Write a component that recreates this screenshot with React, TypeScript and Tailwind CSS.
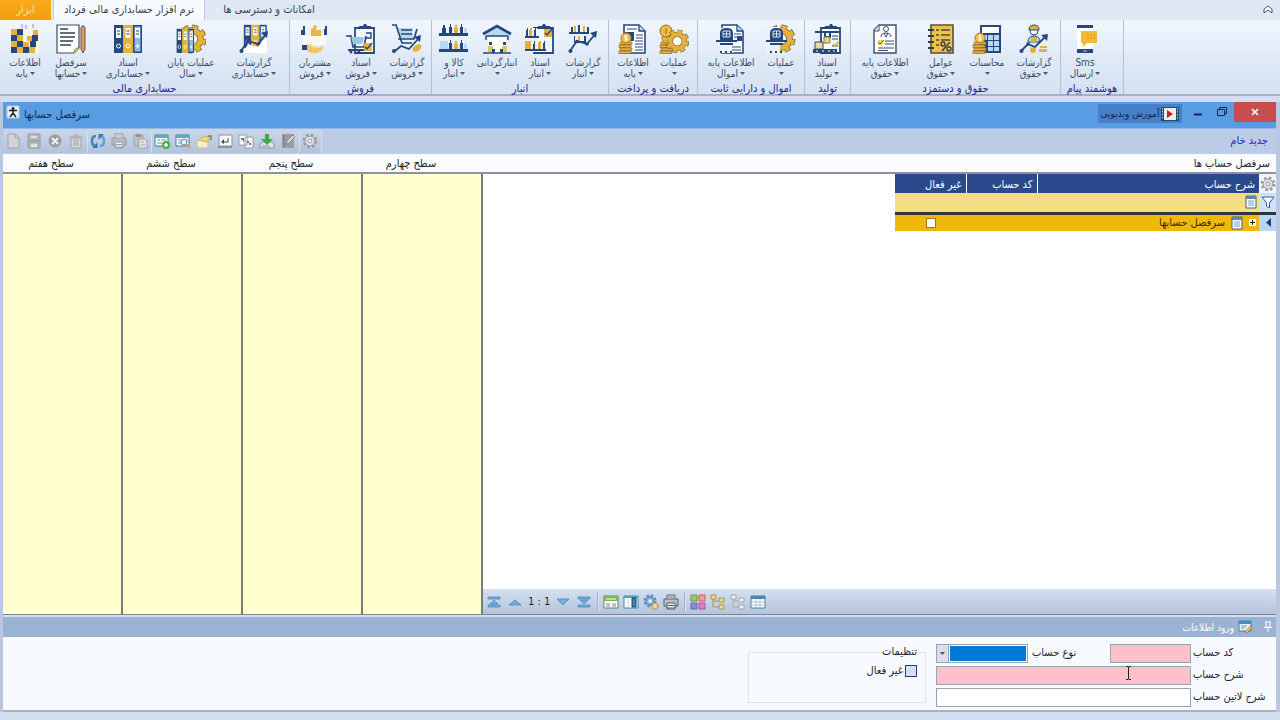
import type { ReactNode } from "react";

const NAVY = "#25467f";
const GOLD = "#e3b13c";
const SKY = "#b5d8f3";

const Binders = () => (
  <>
    <path fill={NAVY} d="M1 1h9v28H1z" />
    <path fill={GOLD} d="M10 1h10v28H10z" />
    <path fill={NAVY} d="M20 1h9v28h-9z" />
    <path fill="#8dbbe4" d="M21.500 2.500h6v25h-6z" />
    <path fill="#f4f8fc" d="M3 4h5v10H3zM12.500 4h5v10h-5zM22 4h5v10h-5z" />
    <path stroke={NAVY} d="M4 7h3M4 10h3M13.500 7h3M13.500 10h3M23 7h3M23 10h3" />
    <circle cx="5.500" cy="22" r="2" fill="none" stroke="#fff" />
    <circle cx="15" cy="22" r="2" fill="none" stroke="#fff" />
    <path stroke="#fff" d="M24.500 20v4M22.500 22h4" />
  </>
);

const Trend = () => (
  <>
    <path d="M2 27 9 17l10 3L28 9" fill="none" stroke={NAVY} strokeWidth="1.800" />
    <path d="m22 9 7-2-1 7z" fill={NAVY} />
    <circle cx="2.500" cy="27" r="2" fill={NAVY} />
    <circle cx="9" cy="17.500" r="1.800" fill={NAVY} />
    <circle cx="19" cy="20" r="1.800" fill={NAVY} />
  </>
);

const GearShape = () => (
  <>
    <circle cx="15" cy="15" r="12" fill="none" stroke="#77602c" strokeWidth="5" strokeDasharray="5.600 3.820" />
    <circle cx="15" cy="15" r="8.500" fill="none" stroke="#77602c" strokeWidth="6.500" />
    <circle cx="15" cy="15" r="12" fill="none" stroke={GOLD} strokeWidth="3.600" strokeDasharray="4.600 4.820" strokeDashoffset="-.500" />
    <circle cx="15" cy="15" r="8.500" fill="none" stroke={GOLD} strokeWidth="5" />
  </>
);

const Coins = () => (
  <>
    <path fill={GOLD} stroke="#8d6b20" strokeWidth=".700" d="M1 27h12v2.500H1zM2 24h12v2.500H2zM1 21h12v2.500H1zM2 18h12v2.500H2z" />
    <circle cx="8" cy="14" r="5" fill="#f2bd42" stroke="#a67b20" />
    <path d="M9.500 12H7.500c-1.500 0-1.500 2 0 2h1c1.500 0 1.500 2 0 2h-2M8 10.500v7" stroke="#fff" fill="none" />
  </>
);

const Sheet = () => (
  <>
    <path d="M6 1h15l6 6v22H6z" fill="#fff" stroke={NAVY} strokeWidth="1.600" />
    <path d="M21 1v6h6" fill={SKY} stroke={NAVY} strokeWidth="1.300" />
  </>
);

const Bottles = ({ y }: { y: number }) => (
  <g transform={`translate(0 ${y})`}>
    <path d="M3 9V4h1V1h2v3h1v5zM10 9V3h1V0h1v3h1v6z" fill={NAVY} />
    <path d="M15 9V4h1V1h2v3h1v5z" fill={GOLD} />
    <path d="M21 9V3h1V0h1v3h1v6z" fill={NAVY} />
    <path d="M25 9V4h3v5z" fill={SKY} />
  </g>
);

const Clipboard = () => (
  <>
    <path d="M9 4h19v25H9z" fill="#f4f9fd" stroke={NAVY} strokeWidth="1.800" />
    <path d="M13 5V2h4l1-2h2l1 2h4v3z" fill={NAVY} />
  </>
);

const Beacon = () => (
  <>
    <path d="M4 16V9q0-5 6.500-5T17 9v7z" fill={NAVY} />
    <path d="M7 7h7v6H7zM10.500 7v6M7 10h7" stroke="#d8e9f8" fill="none" />
    <path d="M0 17h21M4 20h13" stroke={NAVY} strokeWidth="2" />
    <path d="M4 28h2M9 28h2M14 28h2" stroke={NAVY} strokeWidth="2" />
  </>
);

const ribbonIcons: Record<string, ReactNode> = {
  mosaic: (
    <>
      <path fill="#f7f6ec" d="M1 5h28v24H1z" />
      <path fill={GOLD} d="M1 5h6v6H1zM7 11h6v6H7zM1 17h6v6H1zM13 18h6v5h-6zM7 23h6v6H7zM19 23h6v6h-6zM23 6h5v5h-5zM17 12h5v5h-5z" />
      <path fill={NAVY} d="M7 5h6v6H7zM1 11h6v6H1zM22 11h6v6h-6zM7 17h6v6H7zM13 23h6v6h-6zM20 17h6v6h-6zM1 23h6v6H1z" />
      <path stroke="#8896b0" d="M12 0v4M16 1v4M23 0v4" />
    </>
  ),
  document: (
    <>
      <path d="M1 1h22v23l-5 5H1z" fill="#fff" stroke="#444c58" strokeWidth="1.200" />
      <path d="M4 5h8M4 9h15M4 13h15M4 17h13M4 21h11" stroke="#333f50" strokeWidth="1.500" />
      <path d="M18 29c1-3 0-5 5-5" fill="#eee07c" stroke="#817832" />
      <path d="M25 4q2-5 4 0v21l-2 4-2-4z" fill="#d79c67" stroke="#705246" />
    </>
  ),
  binders: <Binders />,
  bindersGear: (
    <>
      <g transform="translate(1 0)">
        <GearShape />
      </g>
      <g transform="translate(0 4) scale(.62 .86)">
        <Binders />
      </g>
    </>
  ),
  bindersTrend: (
    <>
      <g transform="translate(4 0) scale(.82 .82)">
        <Binders />
      </g>
      <path fill="#fff" d="m4 29 5-9 10 3 9-12v18z" />
      <Trend />
    </>
  ),
  customers: (
    <>
      <path fill={NAVY} d="M1 6h4v5H1zM24 5h3v6h-3zM3 2h2v5H3zM25 2h2v4h-2z" />
      <path fill="#edb544" d="M11 5q2 0 3-4l3 1-1 4h5v6H11z" />
      <path fill="#f8f8f4" d="M3 12h23v9H3z" />
      <path fill={NAVY} d="M2 21h5v5H2z" />
      <path fill="#f0c765" d="M7 20q5 1 8 2l3 2 6-2-3 5q-7 5-14 0z" />
      <path fill="#fae6ae" d="M9 21h8l-2 3z" />
    </>
  ),
  saleDoc: (
    <>
      <Clipboard />
      <path d="M0 12h5l2 11h11l2-11" fill="none" stroke={NAVY} strokeWidth="1.700" />
      <path d="M5 13h13l-2 7H7z" fill="#9dc5e8" />
      <path d="M2 26h17" stroke={NAVY} strokeWidth="2" />
      <circle cx="5" cy="28" r="1.500" fill={NAVY} />
      <circle cx="13" cy="28" r="1.500" fill={NAVY} />
      <path fill={GOLD} d="M18 19h8v8h-8z" />
      <path d="m19 23 2 2 5-6M20 9h5v5h-5" stroke={NAVY} fill="none" strokeWidth="1.400" />
    </>
  ),
  cart: (
    <>
      <path fill={SKY} d="M5 4h16v10H8z" />
      <path d="M0 1h4l6 18h10M6 15h16l3-10M9 6h11M9 10h11" stroke={NAVY} strokeWidth="1.700" fill="none" />
      <path d="m3 27 6-5 8 3 10-11" fill="none" stroke={NAVY} strokeWidth="1.800" />
      <path d="m22 13 7-2-1 7z" fill={NAVY} />
      <circle cx="2" cy="27" r="2" fill={NAVY} />
      <ellipse cx="25" cy="24" rx="5" ry="3" transform="rotate(-35 25 24)" fill={GOLD} />
    </>
  ),
  shelves: (
    <>
      <Bottles y={0} />
      <Bottles y={16} />
      <path fill={NAVY} d="M0 9h29v3H0zM0 25h29v3H0z" />
      <path fill={SKY} d="M1 17h8v8H1z" />
    </>
  ),
  warehouse: (
    <>
      <path d="M6 10h18v18H6z" fill="#fff" />
      <path d="M15 2 2 9v3h26V9z" fill={SKY} />
      <path d="M1 10 15 2l14 8" fill="none" stroke={NAVY} strokeWidth="2.600" />
      <path d="M4 12h22M4 12v4M26 12v4M1 29h28" stroke={NAVY} strokeWidth="1.500" />
      <path d="M6 22h5v6H6zM20 22h5v6h-5z" fill="#d9c85b" />
      <path d="M7 18h3v3H7zM21 18h3v3h-3zM10 25h3v4h-3zM18 25h3v4h-3z" fill={NAVY} />
    </>
  ),
  stockDoc: (
    <>
      <Clipboard />
      <path fill="#e9f4fc" d="M0 4h12v24H0zM9 16h16v10H9z" />
      <path fill={NAVY} d="M1 12V6h1V4h1v8M9 12V6h1V3h1v9M0 12h14v2H0zM0 25h21v2H0zM8 25v-5h1v-3h1v8M18 25v-6h1v-2h1v8" />
      <path fill={GOLD} d="M4 12V6h1V4h2v8M0 17h6v8H0zM13 25v-6h1v-2h2v8M19 5h8v8h-8z" />
      <path d="m20 9 2 2 5-6" stroke={NAVY} fill="none" strokeWidth="1.400" />
    </>
  ),
  stockTrend: (
    <>
      <path fill={NAVY} d="M3 8V3h2v5M10 8V1h2v7M19 8V3h2v5M1 8h20v2H1zM6 17v-5h1v5M16 17v-5h2v5M6 17h12v2H6z" />
      <path fill={GOLD} d="M6 8V2h2v6M15 8V2h2v6M10 17v-5h2v5" />
      <Trend />
    </>
  ),
  financeDoc: (
    <>
      <Sheet />
      <path fill={NAVY} d="M7 8h9v9H7z" />
      <path d="M9 5h10M18 11h7M18 14h7M17 17h8M17 20h8M17 23h8M17 26h8" stroke={NAVY} />
      <Coins />
    </>
  ),
  coinsGear: (
    <>
      <Coins />
      <circle cx="7" cy="7" r="6" fill="#f0bd40" stroke="#8d6b20" />
      <path d="M7 4v6" stroke="#8d6b20" />
      <g transform="translate(6 5) scale(.82)">
        <circle cx="15" cy="15" r="7" fill="#fff" />
        <GearShape />
      </g>
    </>
  ),
  assetDoc: (
    <>
      <Sheet />
      <path fill="#edf4fb" d="M4 4h13v25H4z" />
      <path d="M18 10h7M18 13h7M16 23h9M16 26h9" stroke={NAVY} />
      <path d="M21 12h5v5h-5z" fill={NAVY} />
      <Beacon />
    </>
  ),
  assetGear: (
    <>
      <GearShape />
      <path fill="#e9f2fa" d="M0 3h14v27H0z" />
      <Beacon />
    </>
  ),
  production: (
    <>
      <Clipboard />
      <path d="M3 8h24M13 8v5h5V8" stroke={NAVY} strokeWidth="2" fill="none" />
      <path fill="#e8d48b" d="M12 13h6v6h-6z" stroke="#8b793f" />
      <path d="M3 18h8v7H3z" fill="#eadb9c" stroke={NAVY} />
      <path d="M20 12h6M20 15h6M20 22h6" stroke={NAVY} />
      <path d="m21 20 2 2 4-5" stroke={GOLD} strokeWidth="2" fill="none" />
      <path d="M1 25h24v4H1z" fill={NAVY} />
      <path d="M4 27h2M10 27h2M16 27h2M21 27h2" stroke="#fff" />
    </>
  ),
  payrollDoc: (
    <>
      <path d="M9 1h17v28H4V6z" fill="#fff" stroke="#3b4d6e" strokeWidth="1.400" />
      <path d="M9 1v6H4" fill="#dbe9f5" stroke="#3b4d6e" />
      <circle cx="16" cy="5" r="2.500" fill="none" stroke="#3b4d6e" />
      <path d="M11 13q0-4 5-4t5 4M14 9l2 4 2-4" fill="none" stroke="#3b4d6e" />
      <path d="M8 16h5v5H8z" fill="#eed564" />
      <path d="m8 18 2 2 4-4" fill="none" stroke="#6c5a20" />
      <path d="M15 17h9M15 20h9M8 24h16M8 26.500h10" stroke="#3b4d6e" />
    </>
  ),
  factors: (
    <>
      <path d="M5 1h22v28H5z" fill="#efc04a" stroke="#57513e" strokeWidth="1.600" />
      <path d="M2 6h6M2 12h6M2 18h6M2 24h6" stroke="#333d52" strokeWidth="2" />
      <path d="M10 6h3M15 6h9M10 11h3M15 11h9M10 16h3M15 16h9M10 21h3" stroke="#4d4938" strokeWidth="1.600" />
      <circle cx="17" cy="20" r="2" fill="none" stroke="#333d52" strokeWidth="1.300" />
      <circle cx="23" cy="25" r="2" fill="none" stroke="#333d52" strokeWidth="1.300" />
      <path d="m16 27 8-9" stroke="#333d52" strokeWidth="1.400" />
    </>
  ),
  calculator: (
    <>
      <path d="M8 1h21v28H8z" fill={NAVY} />
      <path d="M10 3h17v6H10z" fill="#fff" />
      <path d="M10 11h5v5h-5zM16 11h5v5h-5zM22 11h5v5h-5zM16 17h5v5h-5zM22 17h5v5h-5zM16 23h5v4h-5zM22 23h5v4h-5z" fill="#b9daf4" />
      <Coins />
    </>
  ),
  workerTrend: (
    <>
      <circle cx="15" cy="7" r="4" fill="#fff" stroke={NAVY} />
      <path d="M10 6q0-5 5-5t5 5z" fill={GOLD} stroke={NAVY} />
      <path d="M9 18q0-6 6-6t6 6z" fill={SKY} stroke={NAVY} />
      <path d="M12 18v-5h6v5" fill={GOLD} />
      <path d="M21 22h7v2h-7zM20 25h8v3h-8z" fill={GOLD} />
      <circle cx="14" cy="26" r="3" fill={GOLD} />
      <path d="m2 27 7-7 7 3 11-11" fill="none" stroke={NAVY} strokeWidth="1.800" />
      <path d="m22 11 7-1-1 7z" fill={NAVY} />
      <circle cx="2.500" cy="27" r="2" fill={NAVY} />
      <circle cx="9" cy="20" r="1.800" fill={NAVY} />
    </>
  ),
  phone: (
    <>
      <path d="M7 1h16v28H7z" fill="#fff" />
      <path d="M7 1h16v3H7zM7 25h16v4H7z" fill={NAVY} />
      <path d="M11 7h16v12H17l-4 4v-4h-2z" fill="#f1ba32" />
      <path d="M17 11h8M17 14h8" stroke="#d69a1f" strokeDasharray="2 1" />
      <path d="M13 27h4" stroke="#9ec5e6" />
    </>
  ),
};

type RibbonItem = { icon: string; top: string; bottom?: string; width: string };

const ribbonGroups: { title: string; width: string; items: RibbonItem[] }[] = [
  {
    title: "حسابداری مالی",
    width: "w-[290px]",
    items: [
      { icon: "mosaic", top: "اطلاعات", bottom: "پایه", width: "w-12" },
      { icon: "document", top: "سرفصل", bottom: "حسابها", width: "w-11" },
      { icon: "binders", top: "اسناد", bottom: "حسابداری", width: "w-[70px]" },
      { icon: "bindersGear", top: "عملیات پایان", bottom: "سال", width: "w-14" },
      { icon: "bindersTrend", top: "گزارشات", bottom: "حسابداری", width: "w-[70px]" },
    ],
  },
  {
    title: "فروش",
    width: "w-[142px]",
    items: [
      { icon: "customers", top: "مشتریان", bottom: "فروش", width: "w-12" },
      { icon: "saleDoc", top: "اسناد", bottom: "فروش", width: "w-11" },
      { icon: "cart", top: "گزارشات", bottom: "فروش", width: "w-12" },
    ],
  },
  {
    title: "انبار",
    width: "w-[177px]",
    items: [
      { icon: "shelves", top: "کالا و", bottom: "انبار", width: "w-[42px]" },
      { icon: "warehouse", top: "انبارگردانی", width: "w-11" },
      { icon: "stockDoc", top: "اسناد", bottom: "انبار", width: "w-[42px]" },
      { icon: "stockTrend", top: "گزارشات", bottom: "انبار", width: "w-11" },
    ],
  },
  {
    title: "دریافت و پرداخت",
    width: "w-[89px]",
    items: [
      { icon: "financeDoc", top: "اطلاعات", bottom: "پایه", width: "w-[46px]" },
      { icon: "coinsGear", top: "عملیات", width: "w-9" },
    ],
  },
  {
    title: "اموال و دارایی ثابت",
    width: "w-[107px]",
    items: [
      { icon: "assetDoc", top: "اطلاعات پایه", bottom: "اموال", width: "w-16" },
      { icon: "assetGear", top: "عملیات", width: "w-9" },
    ],
  },
  {
    title: "تولید",
    width: "w-[46px]",
    items: [{ icon: "production", top: "اسناد", bottom: "تولید", width: "w-[42px]" }],
  },
  {
    title: "حقوق و دستمزد",
    width: "w-[210px]",
    items: [
      { icon: "payrollDoc", top: "اطلاعات پایه", bottom: "حقوق", width: "w-[66px]" },
      { icon: "factors", top: "عوامل", bottom: "حقوق", width: "w-[46px]" },
      { icon: "calculator", top: "محاسبات", width: "w-[46px]" },
      { icon: "workerTrend", top: "گزارشات", bottom: "حقوق", width: "w-12" },
    ],
  },
  {
    title: "هوشمند پیام",
    width: "w-[63px]",
    items: [{ icon: "phone", top: "Sms", bottom: "ارسال", width: "w-[46px]" }],
  },
];

const Tiny = ({ children }: { children: ReactNode }) => (
  <svg viewBox="0 0 16 16" className="size-4 shrink-0" fill="none">
    {children}
  </svg>
);

const Caret = () => (
  <svg viewBox="0 0 5 3" className="w-[5px] h-[3px]" fill="#4a5a76">
    <path d="M0 0h5L2.500 3z" />
  </svg>
);

const smallGear = (
  <>
    <circle cx="8" cy="8" r="6.300" stroke="#95979d" strokeWidth="2" strokeDasharray="2.600 2.350" />
    <circle cx="8" cy="8" r="4.800" fill="#e3e5ea" stroke="#95979d" />
    <circle cx="8" cy="8" r="2" fill="#f2f3f6" stroke="#95979d" />
  </>
);

const printer = (dark: string) => (
  <>
    <path d="M4 5V1h8v4M4 11v4h8v-4" fill="#f4f6f8" stroke={dark} />
    <path d="M1 5h14v7H1z" fill="#b8bcc4" stroke={dark} />
    <path d="M4 9h8v5H4z" fill="#eee" stroke={dark} />
    <path d="M5 3h6M5 11.500h6" stroke={dark} />
  </>
);

const windowIcon = (
  <>
    <path d="M1 2h13v11H1z" fill="#fff" stroke="#327e9c" />
    <path d="M1 2h13v3H1z" fill="#63a8be" />
    <path d="M3 7h3M7 7h5M3 10h5" stroke="#698c98" />
  </>
);

const toolGroups: { name: string; icon: ReactNode }[][] = [
  [
    { name: "جدید", icon: <><path d="M3 1h7l4 4v10H3z" fill="#d3d4d8" stroke="#a1a4ab" /><path d="M10 1v4h4" stroke="#a1a4ab" /></> },
    { name: "ذخیره", icon: <><path d="M2 1h12v14H2z" fill="#bfc1c6" stroke="#999ca4" /><path d="M4 2h8v4H4zM4 10h8v5H4z" fill="#e0e1e4" stroke="#999ca4" /><path d="M2 8h12" stroke="#888c94" /></> },
    { name: "انصراف", icon: <><circle cx="8" cy="8" r="6.500" fill="#9b9da3" /><path d="m5 5 6 6m0-6-6 6" stroke="#f1f2f5" strokeWidth="2" /></> },
    { name: "حذف", icon: <><path d="M3 5h10v10H3z" fill="#d7d8dc" stroke="#a1a4aa" /><path d="M1 4h14M6 4V2h4v2M6 6v7M8 6v7M10 6v7" stroke="#a1a4aa" /></> },
  ],
  [
    { name: "بازخوانی", icon: <><path d="M6 3Q2 3 2 8t4 5" stroke="#4385b6" strokeWidth="2.500" /><path d="M10 13q4 0 4-5t-4-5" stroke="#5ca2cf" strokeWidth="2.500" /><path d="M7.500 9v6H2zM8.500 7V1H14z" fill="#377caf" /></> },
    { name: "چاپ", icon: printer("#94979f") },
    { name: "الصاق", icon: <><path d="M2 2h9v11H2z" fill="#bfc0c5" stroke="#a1a3a9" /><path d="M4 1h5v3H4z" fill="#93969e" /><path d="M7 6h6l2 2v7H7z" fill="#e4e5e8" stroke="#a1a3a9" /><path d="M9 9h3M9 12h4" stroke="#a1a3a9" /></> },
  ],
  [
    { name: "افزودن", icon: <>{windowIcon}<circle cx="12" cy="12" r="4" fill="#4caf45" /><path d="M12 10v4M10 12h4" stroke="#fff" strokeWidth="1.500" /></> },
    { name: "جستجو", icon: <>{windowIcon}<circle cx="9" cy="9" r="3" fill="#dcefff" stroke="#5b86aa" /><path d="m11 11 4 4" stroke="#d99d43" strokeWidth="2" /></> },
    { name: "برچسب", icon: <><path d="M1 7h11v8H1z" fill="#f4eed0" stroke="#c4bb92" /><path d="m3 7 5-4 6 1-3 5z" fill="#ecd778" stroke="#c9b45c" /><path d="M12 3h3v4" stroke="#6f9159" strokeWidth="1.500" /></> },
    { name: "ورود", icon: <><path d="M2 2h13v11H2z" fill="#f9fafb" stroke="#8b929e" /><path d="M1 14h14" stroke="#8b929e" strokeWidth="2" /><path d="M11 5v4H5" stroke="#3f4a5c" /><path d="m7 6-3 3 3 2z" fill="#3f4a5c" /></> },
    { name: "رونوشت", icon: <><path d="M1 2h8v10H1zM7 4h8v11H7z" fill="#f7f7f8" stroke="#9ca0aa" /><path d="M3 6h3M5 8h1M9 9h2M11 11h2" stroke="#48505c" strokeWidth="1.500" /></> },
    { name: "دریافت", icon: <><path d="m1 11 2-2h10l2 2v4H1z" fill="#e1e3e8" stroke="#8e939c" /><path d="M6 1h4v5h4l-6 6-6-6h4z" fill="#3fa848" /><path d="M3 13h8" stroke="#8e939c" /></> },
    { name: "یادداشت", icon: <><path d="M2 1h12v14H2z" fill="#999ca1" /><path d="M4 2v12" stroke="#73777e" /><path d="m6 11 1-3 6-6 2 2-6 6z" fill="#d8d9dc" stroke="#777" strokeWidth=".700" /></> },
  ],
  [{ name: "تنظیمات", icon: smallGear }],
];

const gridIcon = (
  <>
    <path d="M1 2h14v12H1z" fill="#fff" stroke="#3e7e9d" />
    <path d="M1 2h14v3H1z" fill="#438aac" />
    <path d="M6 5v9M10 5v9M2 8h12M2 11h12" stroke="#a9c4cf" />
  </>
);

const treeIcon = (fill: string, line: string) => (
  <>
    <path d="M3 4v9h6M3 7h6M3 3h3" stroke={line} />
    <path d="M1 1h5v4H1zM9 4h5v4H9zM9 11h5v4H9z" fill={fill} stroke={line} />
  </>
);

const navIcons: { name: string; icon: ReactNode }[][] = [
  [
    { name: "نمای کارت", icon: <><path d="M1 2h14v12H1z" fill="#fff" stroke="#4b8a79" /><path d="M1 2h14v5H1z" fill="#83b64a" /><path d="M3 5h10" stroke="#fff" /><path d="M3 10h4M9 10h4M3 12h4M9 12h4" stroke="#7c8888" /></> },
    { name: "ستون‌ها", icon: <><path d="M1 2h14v12H1z" fill="#fff" stroke="#398daa" /><path d="M1 3h14" stroke="#4da4bd" strokeWidth="2" /><path d="M9 4h4v9H9z" fill="#3e87b0" stroke="#20445d" /><path d="M5 5v9" stroke="#b8c9d2" /></> },
    { name: "پیکربندی", icon: <><circle cx="7" cy="7" r="5.500" stroke="#568db9" strokeWidth="2" strokeDasharray="2.600 1.720" /><circle cx="7" cy="7" r="4" fill="#8fbadb" stroke="#568db9" strokeWidth="1.500" /><circle cx="7" cy="7" r="1.500" fill="#f8fbff" /><circle cx="12" cy="12" r="3" fill="#f5d68e" stroke="#c79746" strokeWidth="1.600" strokeDasharray="2 .700" /></> },
    { name: "چاپ فهرست", icon: printer("#545e6a") },
  ],
  [
    { name: "رنگ‌ها", icon: <><path d="M1 1h6v6H1z" fill="#9aca5e" stroke="#6d9f47" /><path d="M9 1h6v6H9z" fill="#efa38c" stroke="#cb6557" /><path d="M1 9h6v6H1z" fill="#8d8adc" stroke="#6363ba" /><path d="M9 9h6v6H9z" fill="#dc7ec6" stroke="#b15198" /></> },
    { name: "باز کردن درخت", icon: treeIcon("#eadb8d", "#ad964c") },
    { name: "بستن درخت", icon: treeIcon("#eceff4", "#a0a9b6") },
    { name: "جدول", icon: gridIcon },
  ],
];

const arrows: Record<string, ReactNode> = {
  first: <path d="M2 3h12v2H2zM2 13h12v-2H2zM8 6l4 4H4z" />,
  prev: <path d="m8 6 6 5H2z" />,
  next: <path d="M2 5h12l-6 6z" />,
  last: <path d="M2 3h12v2H2zM2 13h12v-2H2zM4 6h8l-4 4z" />,
};

const NavArrow = ({ kind, label }: { kind: string; label: string }) => (
  <button aria-label={label}>
    <svg viewBox="0 0 16 16" className="size-4" fill="#76b0da" stroke="#4788b8" strokeWidth=".800">
      {arrows[kind]}
    </svg>
  </button>
);

const Divider = () => <span className="h-5 w-0.5 bg-[#a3b2ca] border-r border-[#dde6f2]" />;

const Note = () => (
  <svg viewBox="0 0 12 14" className="h-3.5 w-3 inline-block" fill="none">
    <path d="M1 1h10v12H1z" fill="#f8fbff" stroke="#50617d" />
    <path d="M1 1h10v3H1z" fill="#5e86b4" />
    <path d="M3 6h6M3 8h6M3 10h6" stroke="#7ca2c7" />
  </svg>
);

const Ribbon = () => (
  <nav className="flex h-[76px] bg-linear-to-b from-[#f1f6fd] via-[#e0eaf7] to-[#d5e1f1] border-b-2 border-[#a4b0c6]">
    {ribbonGroups.map((group) => (
      <section
        key={group.title}
        className={`${group.width} shrink-0 flex flex-col border-r border-[#b3c0d5] pt-1`}
      >
        <div className="flex px-px">
          {group.items.map((item) => (
            <button
              key={item.icon}
              className={`${item.width} shrink-0 flex flex-col items-center text-[10px] leading-[11px] text-[#384a68]`}
            >
              <svg viewBox="0 0 30 30" className="size-[30px] mb-[3px]" fill="none">
                {ribbonIcons[item.icon]}
              </svg>
              <span className="whitespace-nowrap">{item.top}</span>
              <span dir="rtl" className="flex items-center gap-0.5 whitespace-nowrap h-[11px]">
                <Caret />
                {item.bottom}
              </span>
            </button>
          ))}
        </div>
        <h2 className="mt-[3px] text-center leading-[14px] whitespace-nowrap text-[#22228c]" dir="rtl">
          {group.title}
        </h2>
      </section>
    ))}
  </nav>
);

const AccountGrid = () => (
  <table dir="rtl" className="w-[381px] table-fixed border-collapse">
    <colgroup>
      <col className="w-[17px]" />
      <col />
      <col className="w-[71px]" />
      <col className="w-[71px]" />
    </colgroup>
    <thead>
      <tr className="h-[19px] bg-[#2b4a8d] text-white leading-4">
        <th className="bg-[#f0f3f8] p-0">
          <Tiny>{smallGear}</Tiny>
        </th>
        <th className="pt-0.5 pb-0 px-1 font-normal text-right">شرح حساب</th>
        <th className="pt-0.5 pb-0 px-1 font-normal text-right border-r border-white">کد حساب</th>
        <th className="pt-0.5 pb-0 px-1 font-normal text-right border-r border-white">غیر فعال</th>
      </tr>
    </thead>
    <tbody>
      <tr className="h-[20px] bg-[#f5dd83] border-b-3 border-[#30343f]">
        <td className="bg-[#cfe2f5] p-0">
          <Tiny>
            <path d="M2 3h12L9.500 9v5l-3-2V9z" fill="#f5faff" stroke="#2c5f9e" />
          </Tiny>
        </td>
        <td colSpan={3} className="py-0 px-0.5 leading-none">
          <Note />
        </td>
      </tr>
      <tr className="h-[17px] bg-[#efb80a] text-[#3a2b05]">
        <td className="bg-[#b9d7f3] p-0">
          <Tiny>
            <path d="M11 3v9L6 7.500z" fill="#173f80" />
          </Tiny>
        </td>
        <td colSpan={2} className="py-0 px-[3px] leading-4">
          <div className="flex items-center gap-1.5">
            <button aria-label="باز کردن">
              <svg viewBox="0 0 7 7" className="size-[7px]">
                <path d="M0 0h7v7H0z" fill="#fff" />
                <path d="M1 3.500h5M3.500 1v5" stroke="#222" />
              </svg>
            </button>
            <Note />
            <span>سرفصل حسابها</span>
          </div>
        </td>
        <td className="p-0">
          <input
            type="checkbox"
            aria-label="غیر فعال"
            className="block mx-auto size-2.5 appearance-none bg-white border border-[#8d7a3c]"
          />
        </td>
      </tr>
    </tbody>
  </table>
);

const levels = ["سطح هفتم", "سطح ششم", "سطح پنجم", "سطح چهارم"];

const EntryForm = () => (
  <form dir="rtl" className="flex h-[75px] bg-[#f7fbff] border-b-2 border-[#aab2c2] text-[#1d2433]">
    <div className="flex w-[340px] flex-col gap-0.5 pt-1.5">
      <div className="flex items-center h-5">
        <label htmlFor="code" className="w-[85px] pl-0.5 text-left">کد حساب</label>
        <input id="code" className="w-[81px] h-[19px] bg-[#ffc0cb] border border-[#9aa3b5] px-1" />
        <label htmlFor="kind" className="w-[82px] pl-1 text-left">نوع حساب</label>
        <div className="flex w-[92px] h-[19px] border border-[#9aa3b5] bg-white">
          <select id="kind" className="m-px flex-1 min-w-0 appearance-none bg-[#0078d7]" />
          <span className="flex w-3 items-center justify-center bg-[#d8dfea] border-r border-[#9aa3b5]">
            <Caret />
          </span>
        </div>
      </div>
      <div className="flex items-center h-5">
        <label htmlFor="desc" className="w-[85px] pl-0.5 text-left">شرح حساب</label>
        <input id="desc" className="flex-1 min-w-0 h-[19px] bg-[#ffc0cb] border border-[#9aa3b5] px-1" />
      </div>
      <div className="flex items-center h-5">
        <label htmlFor="latin" className="w-[85px] pl-0.5 text-left whitespace-nowrap">شرح لاتین حساب</label>
        <input id="latin" className="flex-1 min-w-0 h-[19px] bg-white border border-[#9aa3b5] px-1" />
      </div>
    </div>
    <fieldset className="mr-2.5 mt-2 h-[58px] w-[178px] border border-[#dde4ee] px-2">
      <legend className="leading-[14px]">تنظیمات</legend>
      <label className="mt-1.5 flex items-center gap-0.5 leading-3">
        <input type="checkbox" className="size-3 appearance-none bg-[#cfe0f8] border border-[#2b3f66]" />
        غیر فعال
      </label>
    </fieldset>
  </form>
);

// mouse I-beam resting over the description field
const TextCursor = () => (
  <svg viewBox="0 0 7 14" className="pointer-events-none absolute right-[148px] bottom-10 h-3.5 w-[7px]" fill="none">
    <path d="M1 .500h2l.500.500.500-.500h2M3.500 1v12M1 13.500h2l.500-.500.500.500h2" stroke="#222" />
  </svg>
);

export default function App() {
  return (
    <div className="relative flex min-h-screen flex-col bg-[#d3dff0] font-['DejaVu_Sans_Condensed','DejaVu_Sans',sans-serif] text-[11px]">
      <header className="flex h-5 items-stretch bg-[#dfe9f6] text-[#3a4358]">
        <button className="w-[51px] bg-linear-to-b from-[#f9ab1b] to-[#f39c0c] text-[#ffe3a3]">ابزار</button>
        <button className="ml-0.5 w-[152px] bg-[#f7faff] border-x border-[#bccbe0]">
          نرم افزار حسابداری مالی فرداد
        </button>
        <button className="w-32">امکانات و دسترسی ها</button>
        <button aria-label="جمع کردن" className="ml-auto mr-1">
          <Tiny>
            <path d="m4 7 4-3 4 3v4l-4-3-4 3z" fill="#fff" stroke="#4a5468" />
          </Tiny>
        </button>
      </header>
      <Ribbon />

      <main className="mt-1.5 mb-2 flex flex-1 flex-col border-l-3 border-r-4 border-[#b9c8e0]">
        <div className="flex h-[27px] items-start bg-[#589ce4] border-b border-[#8eb9ea] text-[#14284e]">
          <svg viewBox="0 0 14 14" className="mt-[3px] ml-[3px] size-3.5" fill="none">
            <path d="M1 1h12v12H1z" fill="#e7eef5" stroke="#b9cbdc" />
            <circle cx="7" cy="3.500" r="1.500" fill="#222" />
            <path d="M3 5.500h8M7 5v4M4 12l3-4 3 4" stroke="#222" strokeWidth="1.500" />
          </svg>
          <h1 className="ml-1 mt-[5px] leading-4">سرفصل حسابها</h1>
          <button className="ml-auto mt-0.5 flex h-[19px] w-[84px] items-center justify-center gap-0.5 bg-[#4680c9] text-[10px]">
            آموزش ویدیویی
            <svg viewBox="0 0 18 14" className="h-3.5 w-[18px]">
              <path d="M0 0h18v14H0z" fill="#1f4c66" />
              <path d="M3 1h12v12H3z" fill="#f5e9ec" />
              <path d="M1.500 1v12M16.500 1v12" stroke="#bde0ea" strokeDasharray="1.500 1.500" />
              <path d="m6 3 6 4-6 4z" fill="#c8202c" />
            </svg>
          </button>
          <button aria-label="کوچک کردن" className="ml-2 mt-0.5">
            <Tiny>
              <path d="M4 10.500h8" stroke="#14284e" strokeWidth="2" />
            </Tiny>
          </button>
          <button aria-label="بازیابی" className="ml-2 mr-1 mt-0.5">
            <Tiny>
              <path d="M3.500 5.500h7v6h-7zM5.500 5V3.500h7v6H11" stroke="#14284e" />
            </Tiny>
          </button>
          <button aria-label="بستن" className="flex h-5 w-[42px] items-center justify-center bg-[#c84d50]">
            <Tiny>
              <path d="m5 5 6 6m0-6-6 6" stroke="#fff" strokeWidth="1.600" />
            </Tiny>
          </button>
        </div>

        <div className="flex h-[25px] items-start bg-[#bccce6]">
          {toolGroups.map((group, i) => (
            <div
              key={i}
              className="flex h-6 items-center gap-[5px] rounded-r bg-linear-to-b from-[#cad7ea] to-[#b3c2dc] border-r border-[#d5e0f0] pr-[3px] pl-0.5"
            >
              {group.map((tool) => (
                <button key={tool.name} aria-label={tool.name}>
                  <Tiny>{tool.icon}</Tiny>
                </button>
              ))}
            </div>
          ))}
          <a href="#new" className="ml-auto mr-2 leading-6 text-[#2a22c8]">جدید خام</a>
        </div>

        <div className="flex h-5 items-end bg-[#fafcff] border-b-2 border-[#8d929c] text-[#20242e] leading-4">
          {levels.map((level) => (
            <h3 key={level} className="w-[120px] shrink-0 pr-6 text-center">{level}</h3>
          ))}
          <h3 className="ml-auto mr-1.5">سرفصل حساب ها</h3>
        </div>

        <div className="flex flex-1 bg-white border-b border-[#7d8493]">
          {levels.map((level) => (
            <div key={level} className="w-[120px] shrink-0 bg-[#ffffd0] border-r-2 border-[#7b7d78]" />
          ))}
          <div className="flex flex-1 flex-col">
            <div className="flex flex-1 items-start justify-end">
              <AccountGrid />
            </div>
            <div className="flex h-[25px] items-center gap-[5px] bg-linear-to-b from-[#d5e0f0] to-[#b5c4dc] px-[3px] text-[#1f2937]">
              <NavArrow kind="first" label="اولین" />
              <NavArrow kind="prev" label="قبلی" />
              <span className="font-['DejaVu_Sans'] text-[10px] leading-4">1 : 1</span>
              <NavArrow kind="next" label="بعدی" />
              <NavArrow kind="last" label="آخرین" />
              {navIcons.map((group, i) => (
                <div key={i} className="flex items-center gap-1">
                  <Divider />
                  {group.map((item) => (
                    <button key={item.name} aria-label={item.name}>
                      <Tiny>{item.icon}</Tiny>
                    </button>
                  ))}
                </div>
              ))}
            </div>
          </div>
        </div>

        <div className="mt-0.5 flex h-5 items-center justify-end gap-1 bg-[#9ab3d2] text-white">
          <h2 className="text-[10px]">ورود اطلاعات</h2>
          <svg viewBox="0 0 14 14" className="size-3.5" fill="none">
            <path d="M1 1h12v10H1z" fill="#e9f4fc" stroke="#3c7ca8" />
            <path d="M1 1h12v3H1z" fill="#438dbc" />
            <path d="M3 6h6M3 8h4" stroke="#7294a9" />
            <path d="m7 12 5-6 2 2-5 5z" fill="#efbd54" stroke="#8d682a" strokeWidth=".600" />
          </svg>
          <button aria-label="سنجاق" className="ml-1">
            <Tiny>
              <path d="M5 3h6M6 3v5h4V3M4 8.500h8M8 9v4" stroke="#fff" />
            </Tiny>
          </button>
        </div>
        <EntryForm />
      </main>
      <TextCursor />
    </div>
  );
}
